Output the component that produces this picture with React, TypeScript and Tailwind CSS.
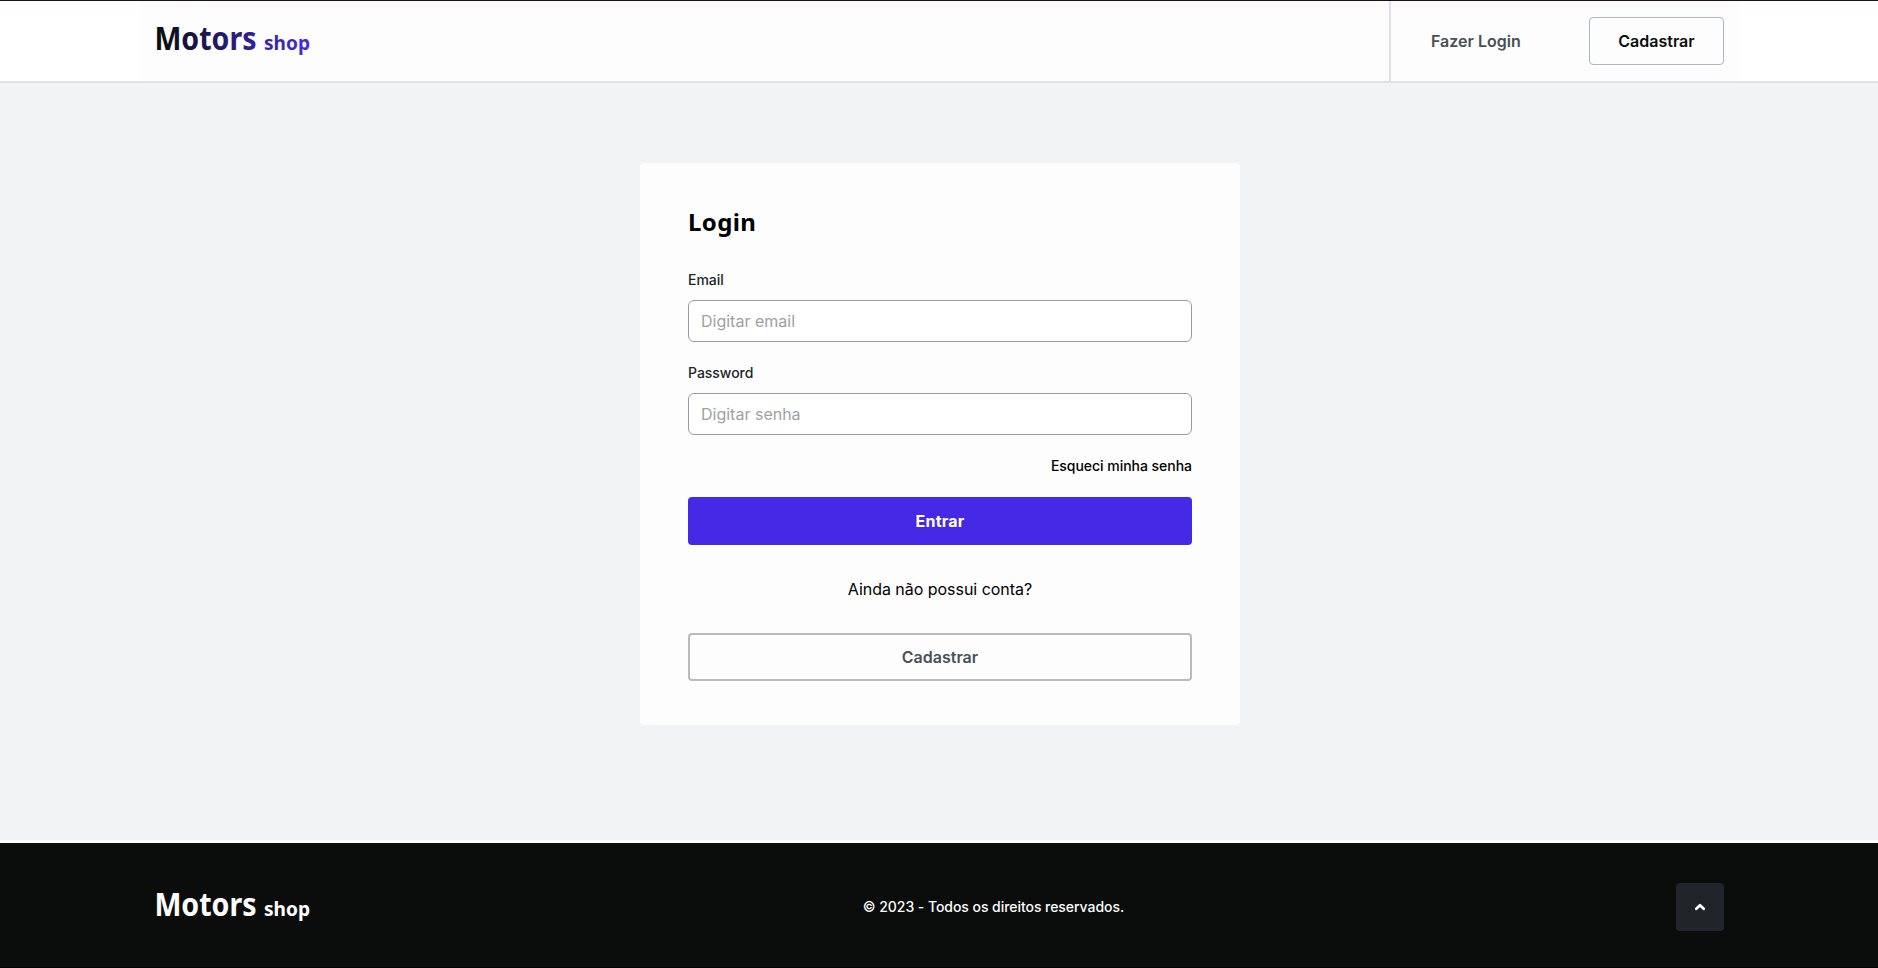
type LogoProps = { id: string; from: string; to: string };

function Logo({ id, from, to }: LogoProps) {
  return (
    <svg width="166" height="52" viewBox="-5 0 166 52" className="-mx-[5px] block" role="img" aria-label="Motors shop">
      <defs>
        <linearGradient id={id} gradientUnits="userSpaceOnUse" x1="2" y1="0" x2="154" y2="0">
          <stop offset="0" stopColor={from} />
          <stop offset="1" stopColor={to} />
        </linearGradient>
      </defs>
      <g fill={`url(#${id})`} fontFamily="'Noto Sans', sans-serif" fontWeight="700">
        <text x="-0.6" y="35" fontSize="32" textLength="102.2" lengthAdjust="spacingAndGlyphs">Motors</text>
        <text x="109" y="35" fontSize="20" textLength="46" lengthAdjust="spacingAndGlyphs">shop</text>
      </g>
    </svg>
  );
}

function Header() {
  return (
    <header className="h-[83px] shrink-0 border-t border-b-2 border-t-[#1f0a20] border-b-[#dee2e6] bg-white">
      <div className="mx-auto flex h-full w-[1600px] items-center justify-between bg-[#fdfdfd] pr-4 pl-[15px]">
        <Logo id="logo-brand" from="#0b0d0d" to="#4529e6" />
        <nav className="flex h-full items-center border-l-2 border-[#dee2e6] pl-10">
          <a href="#" className="mr-[69px] w-[89px] text-base font-semibold whitespace-nowrap text-[#495057]">Fazer Login</a>
          <a href="#" className="flex h-12 w-[135px] items-center justify-center rounded border border-[#adb5bd] text-base font-semibold text-[#0b0d0d]">
            Cadastrar
          </a>
        </nav>
      </div>
    </header>
  );
}

type FieldProps = { id: string; label: string; type: string; placeholder: string };

function Field({ id, label, type, placeholder }: FieldProps) {
  return (
    <div className="flex flex-col gap-[9px]">
      <label htmlFor={id} className="text-sm leading-[22px] font-medium tracking-[-0.03px] text-[#212529]">{label}</label>
      <input
        id={id}
        type={type}
        placeholder={placeholder}
        className="h-[42px] rounded-md border border-[#9b9b9b] bg-white px-3 text-base placeholder:text-[#9f9f9f]"
      />
    </div>
  );
}

function LoginCard() {
  return (
    <form className="flex h-[562px] w-[600px] flex-col rounded bg-[#fdfdfd] px-12 pt-[44px]">
      <h1 className="mb-[32px] font-['Noto_Sans',sans-serif] text-2xl leading-[30px] font-bold tracking-[0.4px] text-black">Login</h1>
      <div className="flex flex-col gap-5">
        <Field id="email" label="Email" type="email" placeholder="Digitar email" />
        <Field id="password" label="Password" type="password" placeholder="Digitar senha" />
      </div>
      <a href="#" className="mt-5 self-end text-sm leading-[22px] font-medium tracking-[-0.03px] text-black">Esqueci minha senha</a>
      <button type="button" className="mt-5 h-12 rounded bg-[#4529e6] text-base font-bold tracking-[0.2px] text-white">Entrar</button>
      <p className="mt-8 text-center text-base leading-6 tracking-[-0.03px] text-black">Ainda não possui conta?</p>
      <button type="button" className="mt-8 h-12 rounded border-2 border-[#bababa] text-base font-semibold text-[#495057]">
        Cadastrar
      </button>
    </form>
  );
}

function Footer() {
  return (
    <footer className="h-[127px] shrink-0 border-t-[3px] border-white bg-[#0b0d0d]">
      <div className="mx-auto flex h-32 w-[1600px] items-center justify-between pr-4 pl-[15px]">
        <Logo id="logo-light" from="#ffffff" to="#ffffff" />
        <p className="text-sm font-medium tracking-[-0.05px] text-[#fdfdfd]">© 2023 - Todos os direitos reservados.</p>
        <button type="button" aria-label="Voltar ao topo" className="flex size-12 items-center justify-center rounded bg-[#212529]">
          <svg width="12" height="8" viewBox="0 0 12 8" fill="none" stroke="#fff" strokeWidth="2.8" strokeLinecap="round" strokeLinejoin="round">
            <path d="M2.3 5.7 L6 2.3 L9.7 5.7" />
          </svg>
        </button>
      </div>
    </footer>
  );
}

export default function App() {
  return (
    <div className="h-[968px] w-full overflow-hidden border-b border-black">
      <div className="flex h-full w-[1880px] flex-col bg-[#f1f3f5] font-['Inter',sans-serif]">
        <Header />
        <main className="flex flex-1 justify-center pt-20">
          <LoginCard />
        </main>
        <Footer />
      </div>
    </div>
  );
}
